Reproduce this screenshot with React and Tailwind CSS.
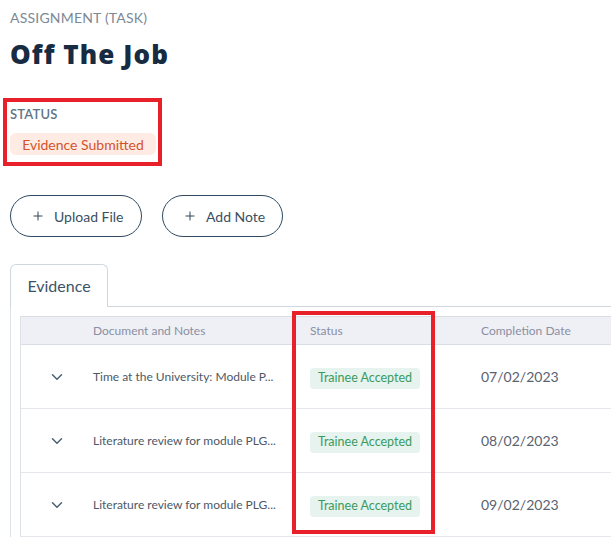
import { ChevronDown, Plus } from 'lucide-react';

const rows = [
  { doc: 'Time at the University: Module P...', status: 'Trainee Accepted', date: '07/02/2023' },
  { doc: 'Literature review for module PLG...', status: 'Trainee Accepted', date: '08/02/2023' },
  { doc: 'Literature review for module PLG...', status: 'Trainee Accepted', date: '09/02/2023' },
];

function ActionButton({ label, w }) {
  return (
    <button
      className={`flex h-[42px] items-center gap-[9px] rounded-full border border-[#2f4a61] pl-[20px] text-[14px] text-[#3a4f61] ${w}`}
    >
      <Plus size={14} strokeWidth={1.6} className="text-[#24384a]" />
      {label}
    </button>
  );
}

export default function App() {
  return (
    <div className="h-[539px] w-[611px] overflow-hidden bg-white font-['Lato',sans-serif]">
      <div className="pl-[10px] pt-[8px]">
        <p className="text-[14px] leading-5 tracking-[0.2px] text-[#7b8995]">ASSIGNMENT (TASK)</p>
        <h1 className="mt-[10px] font-['Open_Sans',sans-serif] text-[26px] font-extrabold leading-8 tracking-[1.1px] text-[#172b43]">
          Off The Job
        </h1>
      </div>

      <div className="ml-[3px] mt-[28px] w-[159px] border-4 border-[#e8202a] pb-[7px] pl-[3px] pr-[2px] pt-[4px]">
        <p className="text-[13px] font-semibold leading-4 tracking-[0.2px] text-[#607485]">STATUS</p>
        <span className="mt-[11px] flex h-[22px] w-[146px] items-center justify-center rounded-md bg-[#fdebe4] text-[14px] text-[#d4532b]">
          Evidence Submitted
        </span>
      </div>

      <div className="ml-[10px] mt-[29px] flex gap-[20px]">
        <ActionButton label="Upload File" w="w-[132px]" />
        <ActionButton label="Add Note" w="w-[121px]" />
      </div>

      <div className="mt-[27px] flex pl-[10px]">
        <div className="flex h-[43px] w-[98px] items-center justify-center rounded-t-md border border-b-0 border-[#cfd6dd] text-[16px] text-[#3d5366]">
          Evidence
        </div>
        <div className="flex-1 border-b border-[#cfd6dd]" />
      </div>

      <div className="ml-[10px] w-[680px] border-l border-[#dde2e7] pl-[9px] pt-[9px]">
        <div className="relative border-l border-[#dde2e7]">
          <div className="grid h-[29px] grid-cols-[72px_217px_171px_1fr] items-center border border-l-0 border-[#d9dde6] bg-[#eff0f5] text-[12px] text-[#8a8fa3]">
            <span />
            <span>Document and Notes</span>
            <span>Status</span>
            <span>Completion Date</span>
          </div>
          {rows.map((r, i) => (
            <div
              key={i}
              className="grid h-[64px] grid-cols-[72px_217px_171px_1fr] items-center border-b border-[#e4e7ec]"
            >
              <span className="pl-[27px]">
                <ChevronDown size={18} strokeWidth={2} className="text-[#4a6172]" />
              </span>
              <span className="text-[12px] text-[#4d5866]">{r.doc}</span>
              <span>
                <span className="inline-flex h-[21px] w-[110px] items-center justify-center rounded bg-[#e6f3ef] text-[12.5px] text-[#3b9a5e]">
                  {r.status}
                </span>
              </span>
              <span className="text-[14px] text-[#5a6270]">{r.date}</span>
            </div>
          ))}
          <div className="absolute left-[271px] top-[-5px] h-[223px] w-[143px] border-4 border-[#e8202a]" />
        </div>
      </div>
    </div>
  );
}
